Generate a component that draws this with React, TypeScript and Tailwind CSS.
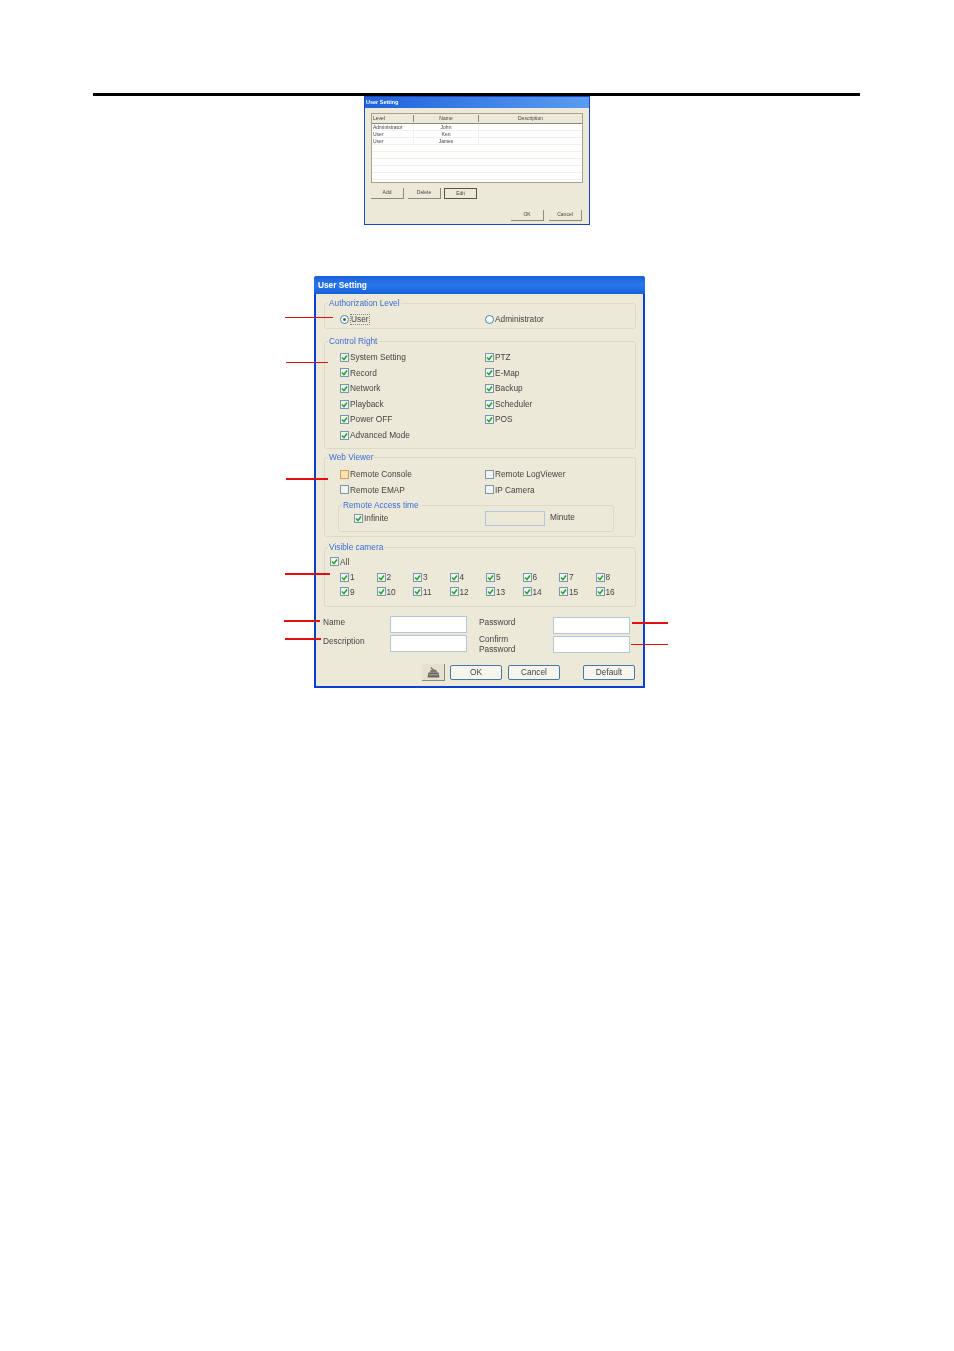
import type { ReactNode } from "react";

const font = "font-['Liberation_Sans',Arial,sans-serif]";

function Check({ checked = true, hot = false }: { checked?: boolean; hot?: boolean }) {
  return (
    <span
      className={`flex h-[9px] w-[9px] shrink-0 items-center justify-center border ${
        hot ? "border-[#d9a04a] bg-[#f6e3bd]" : "border-[#7896b4] bg-[#f4f4ee]"
      }`}
    >
      {checked ? (
        <svg viewBox="0 0 7 7" className="h-[7px] w-[7px]">
          <path d="M1 3.5 L3 5.5 L6 1.5" fill="none" stroke="#22a52a" strokeWidth="1.5" />
        </svg>
      ) : null}
    </span>
  );
}

function CheckRow({ label, checked = true, hot = false }: { label?: string; checked?: boolean; hot?: boolean }) {
  return (
    <div className="flex h-[15.6px] items-center gap-px whitespace-nowrap">
      <Check checked={checked} hot={hot} />
      <span>{label}</span>
    </div>
  );
}

function Radio({ on = false }: { on?: boolean }) {
  return (
    <span className="flex h-[9px] w-[9px] shrink-0 items-center justify-center rounded-full border border-[#4f7fa8] bg-white">
      {on ? <span className="h-[3px] w-[3px] rounded-full bg-[#2f6a3a]" /> : null}
    </span>
  );
}

function Group({ title, className, children }: { title: string; className: string; children: ReactNode }) {
  return (
    <div className={`relative rounded-[3px] border border-[#dcd9c7] ${className}`}>
      <div className="absolute left-[3px] top-[-6px] bg-[#ece9d8] px-px text-[8.3px] leading-[11px] text-[#3a6cd6]">{title}</div>
      {children}
    </div>
  );
}

function XpButton({ children, className }: { children: ReactNode; className: string }) {
  return (
    <div className={`flex h-[15px] items-center justify-center rounded-[2px] border border-[#4a78a6] bg-[#f6f5ee] ${className}`}>
      {children}
    </div>
  );
}

function TextBox({ className = "" }: { className?: string }) {
  return <div className={`h-[17px] w-[77px] border border-[#b4c6d8] bg-white ${className}`} />;
}

function OldButton({ children, className }: { children: ReactNode; className: string }) {
  return (
    <div className={`flex h-[11px] w-[33px] items-center justify-center border-b border-r border-[#8d8a7b] bg-[#ece9d8] text-[5px] text-[#444] ${className}`}>
      {children}
    </div>
  );
}

function SmallDialog() {
  const rows = [
    ["Administrator", "John"],
    ["User", "Ken"],
    ["User", "James"],
    ["", ""],
    ["", ""],
    ["", ""],
    ["", ""],
    ["", ""],
  ];
  return (
    <div className={`ml-[364px] flex h-[129px] w-[226px] flex-col border border-[#1c45c4] bg-[#ece9d8] blur-[0.7px] ${font}`}>
      <div className="flex h-[11px] items-center bg-gradient-to-r from-[#1f62dc] to-[#5a9cf0] pl-[1px] text-[5.5px] font-bold text-white">
        User Setting
      </div>
      <div className="mx-[6px] mt-[5px] h-[70px] border border-[#a5a294] bg-white text-[5px] text-[#444]">
        <div className="grid h-[10px] grid-cols-[42px_65px_1fr] items-center border-b border-[#8d8a7b] bg-[#ece9d8]">
          <div className="border-r border-[#8d8a7b] pl-[1px]">Level</div>
          <div className="border-r border-[#8d8a7b] text-center">Name</div>
          <div className="text-center">Description</div>
        </div>
        {rows.map((r, i) => (
          <div key={i} className="grid h-[7px] grid-cols-[42px_65px_1fr] items-center border-b border-[#f1f1ea] leading-[6px]">
            <div className="border-r border-[#f1f1ea] pl-[1px]">{r[0]}</div>
            <div className="border-r border-[#f1f1ea] text-center">{r[1]}</div>
            <div />
          </div>
        ))}
      </div>
      <div className="ml-[6px] mt-[5px] flex gap-[3px]">
        <OldButton className="">Add</OldButton>
        <OldButton className="ml-px">Delete</OldButton>
        <OldButton className="border border-[#55534a]">Edit</OldButton>
      </div>
      <div className="ml-[146px] mt-[11px] flex gap-[5px]">
        <OldButton className="">OK</OldButton>
        <OldButton className="">Cancel</OldButton>
      </div>
    </div>
  );
}

function UserSetting() {
  const left = ["System Setting", "Record", "Network", "Playback", "Power OFF", "Advanced Mode"];
  const right = ["PTZ", "E-Map", "Backup", "Scheduler", "POS"];
  const cams = Array.from({ length: 16 }, (_, i) => String(i + 1));

  return (
    <div className={`flex h-[412px] w-[331px] flex-col rounded-t-[3px] border-2 border-t-0 border-[#0d3fd0] bg-[#ece9d8] text-[8.3px] text-[#444] blur-[0.65px] ${font}`}>
      <div className="-mx-[2px] flex h-[18px] items-center rounded-t-[3px] bg-gradient-to-b from-[#1a5fd8] via-[#2a78ec] to-[#1560dc] pl-[4px] text-[8.3px] font-bold text-white">
        User Setting
      </div>

      <div className="flex flex-col pl-[8px] pr-[7px] pt-[9px]">
        <Group title="Authorization Level" className="h-[26px]">
          <div className="grid h-full grid-cols-[145px_1fr] items-center pl-[15px] pt-[6px]">
            <div className="flex items-center gap-[1px]">
              <Radio on />
              <span className="border border-dotted border-[#888] leading-[9px]">User</span>
            </div>
            <div className="flex items-center gap-px">
              <Radio />
              <span>Administrator</span>
            </div>
          </div>
        </Group>

        <Group title="Control Right" className="mt-[12px] h-[108px]">
          <div className="grid grid-cols-[145px_1fr] pl-[15px] pt-[7.5px]">
            <div>
              {left.map((l) => (
                <CheckRow key={l} label={l} />
              ))}
            </div>
            <div>
              {right.map((l) => (
                <CheckRow key={l} label={l} />
              ))}
            </div>
          </div>
        </Group>

        <Group title="Web Viewer" className="mt-[8px] h-[80px]">
          <div className="grid grid-cols-[145px_1fr] pl-[15px] pt-[8.5px]">
            <CheckRow label="Remote Console" checked={false} hot />
            <CheckRow label="Remote LogViewer" checked={false} />
            <CheckRow label="Remote EMAP" checked={false} />
            <CheckRow label="IP Camera" checked={false} />
          </div>
          <div className="relative ml-[13px] mt-[7px] h-[27px] w-[276px] rounded-[3px] border border-[#dcd9c7]">
            <div className="absolute left-[3px] top-[-6px] bg-[#ece9d8] px-px text-[8.3px] leading-[11px] text-[#3a6cd6]">
              Remote Access time
            </div>
            <div className="grid h-full grid-cols-[131px_auto_1fr] items-center pl-[15px]">
              <CheckRow label="Infinite" />
              <div className="h-[15px] w-[60px] border border-[#b4c6d8] bg-[#ece9d8]" />
              <span className="pb-px pl-[5px]">Minute</span>
            </div>
          </div>
        </Group>

        <Group title="Visible camera" className="mt-[10px] h-[60px]">
          <div className="pl-[5px] pt-[6px]">
            <CheckRow label="All" />
          </div>
          <div className="grid w-[307px] grid-cols-8 pl-[15px]">
            {cams.map((c) => (
              <div key={c} className="-mb-px">
                <CheckRow label={c} />
              </div>
            ))}
          </div>
        </Group>

        <div className="mt-[9px] grid grid-cols-[66px_77px_86px_77px]">
          <div className="-ml-px flex h-[12px] items-center">Name</div>
          <TextBox />
          <div className="ml-[12px] flex h-[12px] items-center">Password</div>
          <TextBox className="mt-px" />
          <div className="-ml-px mt-[1px] flex h-[13px] items-center">Description</div>
          <TextBox className="mt-[1px]" />
          <div className="ml-[12px] leading-[10px]">
            Confirm
            <br />
            Password
          </div>
          <TextBox className="mt-[2px]" />
        </div>

        <div className="ml-[98px] mt-[10px] flex items-start">
          <div className="flex h-[17px] w-[23px] items-center justify-center border-b border-r border-[#8d8a7b] bg-[#e4e1d0]">
            <svg viewBox="0 0 16 12" className="h-[11px] w-[15px]">
              <path d="M5 0.5 L7.5 3" stroke="#666" strokeWidth="1.2" fill="none" />
              <path d="M4 6 C4 3.5 6 2.5 8 2.5 C10 2.5 12 3.5 12 6 Z" fill="#7a7a74" />
              <path d="M2.5 6 H13.5 L14.5 11.5 H1.5 Z" fill="#666660" />
              <rect x="3" y="8" width="10" height="1" fill="#b5b3a8" />
            </svg>
          </div>
          <XpButton className="ml-[5px] mt-px w-[52px]">OK</XpButton>
          <XpButton className="ml-[6px] mt-px w-[52px]">Cancel</XpButton>
          <XpButton className="ml-[23px] mt-px w-[52px]">Default</XpButton>
        </div>
      </div>
    </div>
  );
}

export default function App() {
  return (
    <div className="min-h-[1351px] bg-white pt-[93px]">
      <div className="ml-[93px] h-[3px] w-[767px] bg-black" />
      <SmallDialog />
      <div className="relative ml-[314px] mt-[51px] w-[331px]">
        <UserSetting />
        {/* callout lines */}
        <div className="absolute left-[-29px] top-[41px] h-px w-[48px] bg-[#e01010]" />
        <div className="absolute left-[-28px] top-[86px] h-px w-[42px] bg-[#e01010]" />
        <div className="absolute left-[-28px] top-[202px] h-[2px] w-[42px] bg-[#e01010]" />
        <div className="absolute left-[-29px] top-[297px] h-[2px] w-[45px] bg-[#e01010]" />
        <div className="absolute left-[-30px] top-[344px] h-[2px] w-[36px] bg-[#e01010]" />
        <div className="absolute left-[-29px] top-[362px] h-[2px] w-[36px] bg-[#e01010]" />
        <div className="absolute left-[318px] top-[346px] h-[2px] w-[36px] bg-[#e01010]" />
        <div className="absolute left-[317px] top-[368px] h-px w-[37px] bg-[#e01010]" />
      </div>
    </div>
  );
}
